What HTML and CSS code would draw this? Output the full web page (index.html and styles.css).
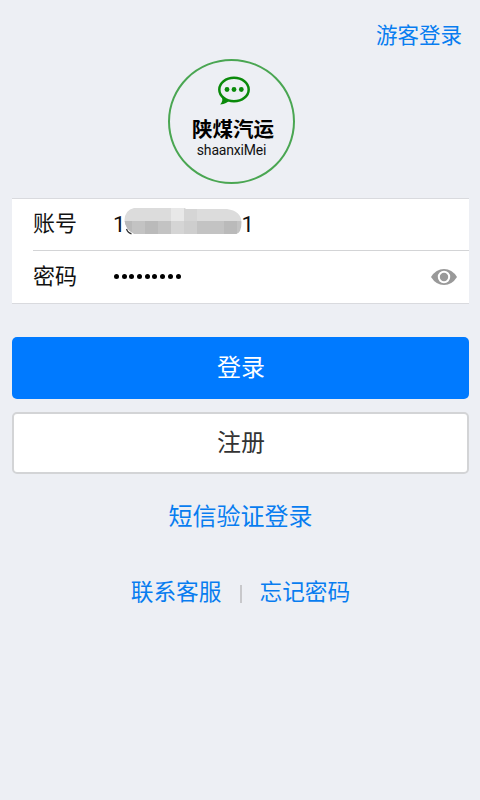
FILE: index.html
```html
<!DOCTYPE html>
<html lang="zh-CN">
<head>
<meta charset="utf-8">
<title>陕煤汽运</title>
<link rel="stylesheet" href="styles.css">
</head>
<body>
<header class="top"><a class="link guest">游客登录</a></header>
<main class="content">
  <div class="logo">
    <svg class="bubble" width="34" height="32" viewBox="0 0 34 32">
      <path d="M4.5 22 C6 24.500 5.500 26.500 3.200 29.500 C8 29 10.500 27.500 13 25Z" fill="#0a8a0a"/>
      <ellipse cx="17" cy="14.500" rx="14.700" ry="11.800" fill="#edeff4" stroke="#0a8a0a" stroke-width="2.500"/>
      <circle cx="10" cy="14.500" r="2.400" fill="#0a8a0a"/><circle cx="17" cy="14.500" r="2.400" fill="#0a8a0a"/><circle cx="24.300" cy="14.500" r="2.400" fill="#0a8a0a"/>
    </svg>
    <div class="name">陕煤汽运</div>
    <div class="latin">shaanxiMei</div>
  </div>
  <form class="fields">
    <div class="row">
      <label class="label">账号</label>
      <div class="value"><span>1</span><svg class="mask" width="118" height="28" viewBox="0 0 118 28">
        <clipPath id="m"><path d="M10 1 H60 L62 2 H103 Q117 4 117.500 15 Q117.500 26 112 27 H10 Q1 22 .5 13 Q1 3 10 1Z"/></clipPath>
        <g clip-path="url(#m)"><path fill="#dcdcdc" d="M0 0h118v14H0z"/><path fill="#c3c3c3" d="M0 14h118v14H0z"/><path fill="#bababa" d="M0 14h8v14H0zM21 14h13v14H21zM100 14h13v14h-13z"/><path fill="#e8e8e8" d="M47 0h13v14H47z"/><path fill="#d5d5d5" d="M47 14h13v14H47zM60 0h13v14H60z"/><path fill="#cecece" d="M60 14h13v14H60z"/></g>
        <path d="M2.500 22Q4 26 7.500 26.800" fill="none" stroke="#333" stroke-width="1.300"/>
      </svg><span>1</span></div>
    </div>
    <div class="row">
      <label class="label">密码</label>
      <div class="value dots"><i></i><i></i><i></i><i></i><i></i><i></i><i></i><i></i><i></i></div>
      <svg class="eye" width="26" height="16" viewBox="0 0 26 16"><path d="M0 8Q5 0 13 0T26 8Q21 16 13 16T0 8Z" fill="#999"/><circle cx="13" cy="8" r="5.200" fill="#999" stroke="#fff" stroke-width="2"/></svg>
    </div>
  </form>
  <button class="btn primary">登录</button>
  <button class="btn plain">注册</button>
  <a class="link sms">短信验证登录</a>
  <nav class="help"><a class="link">联系客服</a><span class="bar"></span><a class="link">忘记密码</a></nav>
</main>
</body>
</html>
```

FILE: styles.css
```css
* { box-sizing: border-box; }
body { margin: 0; height: 800px; background: #edeff4; font-family: Roboto, "Noto Sans CJK SC", sans-serif; color: #111; overflow: hidden; }
.top { height: 59px; padding: 20px 18px 0 0; text-align: right; }
.link { color: #087df0; }
.guest { display: block; font-size: 21.5px; line-height: 32px; }
.content { display: flex; flex-direction: column; padding: 0 11px 0 12px; }
.logo { width: 127px; height: 125px; margin-left: 156px; border: 2px solid #4aa652; border-radius: 50%; display: flex; flex-direction: column; align-items: center; padding-top: 14px; }
.bubble { margin-left: 5px; flex: none; }
.name { font-size: 20.5px; line-height: 24px; font-weight: 700; color: #000; margin: 11px 0 0 3px; }
.latin { font-size: 14px; line-height: 18px; margin-top: -1px; letter-spacing: -.2px; }
.fields { height: 106px; margin: 14px 0 0; padding-left: 21px; background: #fff; border: solid #d9dade; border-width: 1px 0; }
.row { height: 51px; display: flex; align-items: center; }
.row + .row { height: 53px; border-top: 1px solid #d3d4d6; padding-bottom: 2px; }
.label { width: 80px; font-size: 22px; line-height: 32px; margin-top: -1px; }
.row + .row .label { margin-top: 1px; }
.value { flex: 1; display: flex; align-items: center; font-size: 22px; }
.mask { margin: -8px -1px 0 -1px; }
.dots { gap: 2.7px; padding-left: 1px; }
.dots i { width: 5px; height: 5px; border-radius: 50%; background: #000; }
.eye { margin: 1px 12px 0 0; }
.btn { height: 62px; border-radius: 5px; font: 24px/32px "Noto Sans CJK SC", sans-serif; padding: 0 0 5px 1px; }
.primary { margin-top: 33px; background: #007aff; color: #fff; border: 0; }
.plain { margin-top: 13px; background: #fff; color: #333; border: 2px solid #d3d4d6; }
.sms { margin-top: 25px; text-align: center; font-size: 24px; line-height: 36px; }
.help { display: flex; justify-content: center; align-items: center; margin-top: 42px; font-size: 22.7px; line-height: 32px; }
.bar { width: 2px; height: 18px; background: #c8c8cb; margin: 1px 18px 0; }
```
